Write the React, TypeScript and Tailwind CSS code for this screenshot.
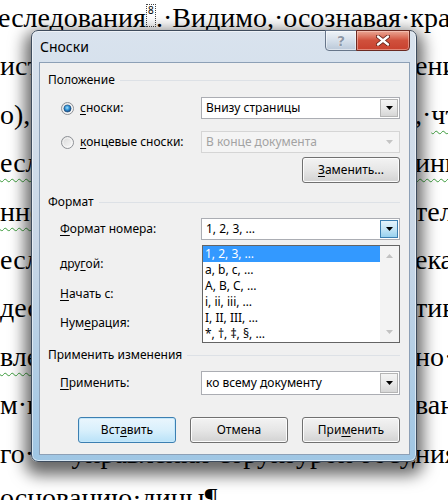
import type { ReactNode } from 'react';

// Word grammar squiggle
const Wavy = ({ children }: { children: ReactNode }) => (
  <span className="underline decoration-[#3b9b3b] decoration-wavy decoration-1 underline-offset-[6px]">
    {children}
  </span>
);

type DocLine = { left: ReactNode; right: ReactNode };

const docLines: DocLine[] = [
  { left: 'истории·государственного', right: 'ения·' },
  { left: 'о),·в·рамках·этого', right: <>,·<Wavy>что</Wavy></> },
  { left: <Wavy>еследов</Wavy>, right: <Wavy>инновац</Wavy> },
  { left: <Wavy>ннего</Wavy>, right: 'теля' },
  { left: 'еследов', right: 'ека' },
  { left: 'дестаби', right: 'тивн' },
  { left: <Wavy>влечен</Wavy>, right: 'но·' },
  { left: 'м·исследования', right: 'вания' },
  { left: 'го·····управления·структурой·государства·····при', right: 'ния' },
];

const FootMark = () => (
  <span className="relative inline-block h-[23px] w-[10px] border border-dotted border-[#444]">
    <span className="absolute left-[1px] top-0 font-['Noto_Sans',sans-serif] text-[10px] leading-[11px]">8</span>
  </span>
);

const Radio = ({ checked }: { checked?: boolean }) => (
  <svg width="13" height="13" viewBox="0 0 13 13">
    <defs>
      <linearGradient id="radio-face" x1="0" y1="0" x2="1" y2="1">
        <stop offset="0" stopColor="#d6d6d6" />
        <stop offset="1" stopColor="#fbfbfb" />
      </linearGradient>
      <radialGradient id="radio-dot" cx="0.45" cy="0.4" r="0.6">
        <stop offset="0" stopColor="#9ee0fb" />
        <stop offset="0.55" stopColor="#2b8bd0" />
        <stop offset="1" stopColor="#163f73" />
      </radialGradient>
    </defs>
    <circle cx="6.5" cy="6.5" r="6" fill="url(#radio-face)" stroke="#8d9095" />
    <circle cx="6.5" cy="6.5" r="4.6" fill="none" stroke="#ffffff" strokeOpacity="0.6" />
    {checked && <circle cx="6.5" cy="6.5" r="3.6" fill="url(#radio-dot)" stroke="#1d4d7c" strokeWidth="0.6" />}
  </svg>
);

const Caret = ({ color = '#000' }: { color?: string }) => (
  <svg width="7" height="4" viewBox="0 0 7 4">
    <path d="M0 0h7L3.5 4z" fill={color} />
  </svg>
);

type ComboProps = { value: string; disabled?: boolean; hot?: boolean; height?: string };

const Combo = ({ value, disabled, hot, height = 'h-[22px]' }: ComboProps) => (
  <div
    className={`flex ${height} w-[199px] border ${
      disabled ? 'border-[#d5d5d5] bg-[#f4f4f4] text-[#a3a3a3]' : 'border-[#abadb3] bg-white text-black'
    }`}
  >
    <div className="flex flex-1 items-center pl-[4px]">{value}</div>
    <div
      className={`m-px flex w-[18px] items-center justify-center border ${
        hot
          ? 'border-[#3c7fb1] bg-gradient-to-b from-[#e5f4fc] via-[#c4e5f6] to-[#98d1ef]'
          : disabled
            ? 'border-transparent'
            : 'border-[#b5b5b5] bg-gradient-to-b from-[#f4f4f4] via-[#e9e9e9] to-[#d6d6d6]'
      }`}
    >
      <Caret color={disabled ? '#c4c4c4' : '#000'} />
    </div>
  </div>
);

const Group = ({ title, className }: { title: string; className: string }) => (
  <div className={`flex h-[14px] items-center pl-[8px] pr-[9px] ${className}`}>
    <span className="leading-[14px]">{title}</span>
    <span className="ml-[5px] h-px flex-1 bg-[#dde1e6]" />
  </div>
);

const Button = ({ children, primary }: { children: ReactNode; primary?: boolean }) => (
  <div
    className={`flex h-[26px] w-[98px] items-center justify-center rounded-[3px] border ${
      primary
        ? 'border-[#3c7fb1] bg-gradient-to-b from-[#eaf6fd] via-[#d9f0fc] to-[#b9e2f8] shadow-[inset_0_0_0_1px_#c5e8fb]'
        : 'border-[#707070] bg-gradient-to-b from-[#f3f3f3] via-[#e6e6e6] to-[#d2d2d2] shadow-[inset_0_0_0_1px_#fcfcfc]'
    }`}
  >
    {children}
  </div>
);

const formats = ['1, 2, 3, …', 'a, b, c, …', 'A, B, C, …', 'i, ii, iii, …', 'I, II, III, …', '*, †, ‡, §, …'];

const Dialog = () => (
  <div className="absolute left-[31px] top-[30px] h-[432px] w-[386px] rounded-[7px] border border-[#3e4c5d] bg-gradient-to-b from-[#d9e3ee] via-[#c9d7e6] to-[#9fc6e4] shadow-[0_7px_16px_6px_rgba(0,0,0,0.6),inset_0_0_0_1px_rgba(255,255,255,0.55)]">
    <div className="flex h-[31px] items-center pl-[8px] font-['Noto_Sans',sans-serif] text-[14px] text-black">
      Сноски
    </div>

    {/* caption buttons */}
    <div className="absolute right-[6px] top-[-1px] flex">
      <div className="flex h-[21px] w-[32px] items-center justify-center rounded-bl-[4px] border border-[#67768a] bg-gradient-to-b from-[#eef3f8] via-[#d5dfea] to-[#bac8d8] shadow-[inset_0_0_0_1px_rgba(255,255,255,0.5)]">
        <span className="font-['DejaVu_Sans',sans-serif] text-[14px] font-bold leading-none text-[#8d98a6] [text-shadow:0_0_1px_#fff,0_0_1px_#fff]">
          ?
        </span>
      </div>
      <div className="-ml-px flex h-[21px] w-[54px] items-center justify-center rounded-br-[4px] border border-[#6b2a22] bg-gradient-to-b from-[#eaa795] via-[#d0503c] to-[#c8412e] shadow-[inset_0_0_0_1px_rgba(255,220,210,0.45)]">
        <svg width="14" height="11" viewBox="0 0 14 11">
          <path d="M2 1.5l10 8M12 1.5l-10 8" stroke="#5b1d14" strokeWidth="4" strokeLinecap="round" />
          <path d="M2 1.5l10 8M12 1.5l-10 8" stroke="#ffffff" strokeWidth="2.4" strokeLinecap="round" />
        </svg>
      </div>
    </div>

    {/* client area */}
    <div className="relative ml-[7px] flex h-[393px] w-[371px] flex-col border border-[#8da0b6] bg-[#f0f0f0] font-['Noto_Sans',sans-serif] text-[12px] text-black">
      <Group title="Положение" className="mt-[10px]" />

      <div className="mt-[10px] flex h-[22px] items-center">
        <div className="flex w-[161px] items-center gap-[6px] pl-[21px]">
          <Radio checked />
          <span>
            <u className="underline-offset-2">с</u>носки:
          </span>
        </div>
        <Combo value="Внизу страницы" />
      </div>

      <div className="mt-[12px] flex h-[22px] items-center">
        <div className="flex w-[161px] items-center gap-[6px] pl-[21px]">
          <Radio />
          <span>
            <u className="underline-offset-2">к</u>онцевые сноски:
          </span>
        </div>
        <Combo value="В конце документа" disabled />
      </div>

      <div className="mt-[4px] flex justify-end pr-[9px]">
        <Button>
          <span>
            <u className="underline-offset-2">З</u>аменить...
          </span>
        </Button>
      </div>

      <Group title="Формат" className="mt-[12px]" />

      <div className="mt-[9px] flex h-[22px] items-center">
        <div className="w-[161px] pl-[20px]">
          <u className="underline-offset-2">Ф</u>ормат номера:
        </div>
        <Combo value="1, 2, 3, …" hot />
      </div>

      <div className="mt-[13px] flex h-[22px] items-center pl-[20px]">
        дру<u className="underline-offset-2">г</u>ой:
      </div>
      <div className="mt-[8px] flex h-[22px] items-center pl-[20px]">
        <u className="underline-offset-2">Н</u>ачать с:
      </div>
      <div className="mt-[7px] flex h-[22px] items-center pl-[20px]">
        Нум<u className="underline-offset-2">е</u>рация:
      </div>

      <Group title="Применить изменения" className="mt-[14px]" />

      <div className="mt-[9px] flex h-[24px] items-center">
        <div className="w-[161px] pl-[20px]">
          <u className="underline-offset-2">П</u>рименить:
        </div>
        <Combo value="ко всему документу" height="h-[24px]" />
      </div>

      <div className="mt-[22px] flex gap-[14px] pl-[38px]">
        <Button primary>
          <span>
            Вст<u className="underline-offset-2">а</u>вить
          </span>
        </Button>
        <Button>Отмена</Button>
        <Button>
          <span>
            При<u className="underline-offset-2">м</u>енить
          </span>
        </Button>
      </div>

      {/* open list of the number format combo */}
      <div className="absolute left-[162px] top-[182px] flex h-[98px] w-[198px] border border-[#646464] bg-white">
        <div className="flex-1">
          {formats.map((f, i) => (
            <div
              key={f}
              className={i === 0 ? 'h-4 bg-[#3399ff] pl-[2px] leading-4 text-white' : 'h-4 pl-[2px] leading-4'}
            >
              {f}
            </div>
          ))}
        </div>
        <div className="flex w-[19px] flex-col items-center justify-between bg-[#f3f3f3] pb-[8px] pt-[8px]">
          <svg width="7" height="4" viewBox="0 0 7 4">
            <path d="M0 4h7L3.5 0z" fill="#c2c2c2" />
          </svg>
          <Caret color="#c2c2c2" />
        </div>
      </div>
    </div>
  </div>
);

export default function App() {
  return (
    <div className="relative h-[500px] w-[448px] overflow-hidden bg-white">
      <div className="-mt-[6px] font-['Liberation_Serif',serif] text-[28px] leading-[48.4px] text-black">
        <div className="-ml-[2px] h-[48.4px] whitespace-nowrap">
          еследования
          <FootMark />
          .·Видимо,·осознавая·край
        </div>
        {docLines.map((l, i) => (
          <div key={i} className="flex h-[48.4px] whitespace-nowrap">
            <span className="w-[415px] shrink-0 overflow-hidden">{l.left}</span>
            <span>{l.right}</span>
          </div>
        ))}
        <div className="-mt-[4px] h-[48.4px] whitespace-nowrap">основанию·дины¶</div>
      </div>
      <Dialog />
    </div>
  );
}
